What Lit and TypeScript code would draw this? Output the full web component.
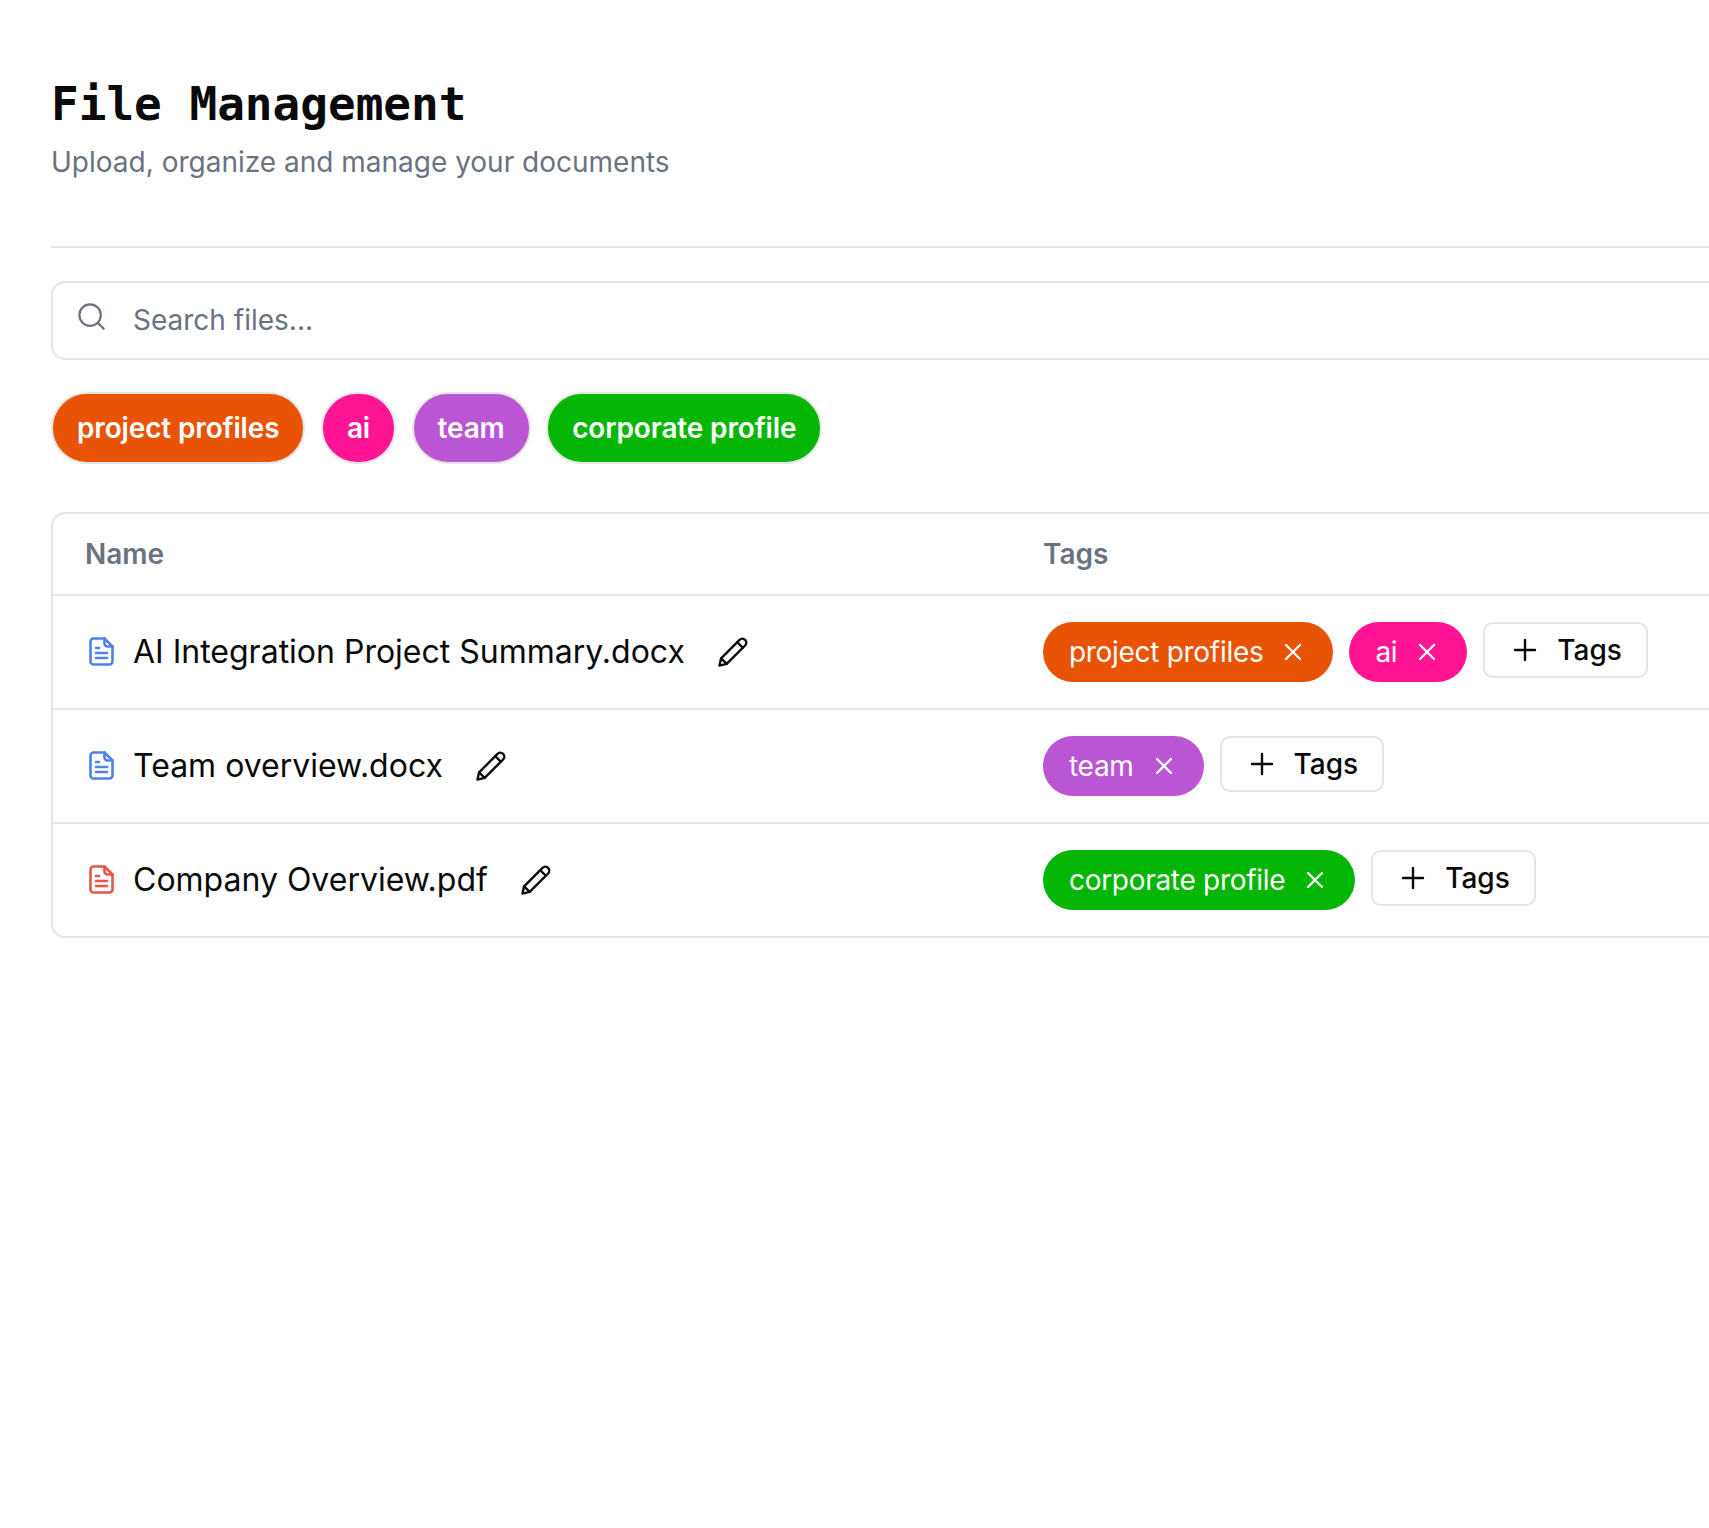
import { LitElement, html, css } from "lit";
import { customElement } from "lit/decorators.js";

const FILES = [
  { name: "AI Integration Project Summary.docx", color: "#4f83e3", tags: [["project profiles", "#e85305"], ["ai", "#ff1493"]] },
  { name: "Team overview.docx", color: "#4f83e3", tags: [["team", "#ba55d3"]] },
  { name: "Company Overview.pdf", color: "#e5574a", tags: [["corporate profile", "#05b605"]] },
];
const CHIPS = [["project profiles", "#e85305"], ["ai", "#ff1493"], ["team", "#ba55d3"], ["corporate profile", "#05b605"]];

const fileIcon = (c: string) => html`<svg class="file" style="color:${c}" viewBox="0 0 25 29" fill="none" stroke="currentColor" stroke-width="2.6" stroke-linecap="round" stroke-linejoin="round">
  <path d="M4.5 1.5H15.5L23.5 9.5V24.5a3 3 0 0 1-3 3H4.5a3 3 0 0 1-3-3V4.5a3 3 0 0 1 3-3Z"/>
  <path d="M15.5 1.5V6.5a3 3 0 0 0 3 3H23.5"/>
  <path d="M7 11H10M7 16H18M7 21H18"/></svg>`;
const pencil = html`<svg class="pencil" viewBox="0 0 29 29" fill="none" stroke="currentColor" stroke-width="2.3" stroke-linecap="round" stroke-linejoin="round">
  <path d="M1.4 27.6L3 20.6L20.8 2.8A3.5 3.5 0 0 1 26.2 8.2L8.4 26Z"/>
  <path d="M18.6 5L24 10.4"/><path d="M3 20.6L8.4 26"/></svg>`;
const xIcon = html`<svg class="x" viewBox="0 0 18 18" fill="none" stroke="currentColor" stroke-width="2.3" stroke-linecap="round"><path d="M2 2L16 16M16 2L2 16"/></svg>`;
const plus = html`<svg class="plus" viewBox="0 0 24 24" fill="none" stroke="currentColor" stroke-width="2.4" stroke-linecap="round"><path d="M12 2V22M2 12H22"/></svg>`;
const search = html`<svg class="search" viewBox="0 0 29 29" fill="none" stroke="currentColor" stroke-width="2.4" stroke-linecap="round"><circle cx="13" cy="13" r="11.5"/><path d="M21.5 21.5L27.5 27.5"/></svg>`;

@customElement("app-root")
export class AppRoot extends LitElement {
  static styles = css`
    :host { display: block; width: 100vw; height: 1528px; overflow: hidden; background: #fff; font-family: Inter, "Liberation Sans", sans-serif; }
    .page { width: 1900px; box-sizing: border-box; padding: 73px 0 0 51px; }
    h1 { margin: 0; font: 700 46px/62px "DejaVu Sans Mono", monospace; color: #0a0a0a; }
    .sub { margin: 7px 0 0; font-size: 28px; line-height: 40px; color: #6b7280; }
    .rule { height: 2px; background: #e5e5e5; margin-top: 64px; }
    .searchbox { margin-top: 33px; height: 79px; box-sizing: border-box; border: 2px solid #e5e5e5; border-radius: 14px; display: flex; align-items: center; padding: 0 0 2px 25px; gap: 28px; color: #6b7280; font-size: 28px; }
    .search { width: 27px; height: 27px; margin-top: -7px; }
    .chips { display: flex; gap: 15.5px; margin-top: 32px; }
    .chip { height: 72px; box-sizing: border-box; border: 2px solid #e5e5e5; border-radius: 36px; padding: 0 24px; display: flex; align-items: center; color: #fff; font-size: 28px; font-weight: 600; letter-spacing: -0.15px; }
    .table { margin-top: 48px; border: 2px solid #e5e5e5; border-radius: 14px; }
    .row { display: grid; grid-template-columns: 990px 1fr; height: 112px; border-top: 2px solid #e5e5e5; align-items: center; }
    .row.head { height: 80px; border-top: 0; color: #6b7280; font-size: 28px; font-weight: 600; }
    .row.head div:first-child { padding-left: 32px; }
    .name { display: flex; align-items: center; padding: 0 0 1px 36px; font-size: 32px; color: #0a0a0a; }
    .file { width: 25px; height: 29px; margin-right: 19px; }
    .pencil { width: 30px; height: 30px; margin-left: 33px; color: #0a0a0a; }
    .tags { display: flex; gap: 16px; align-items: center; }
    .tag { height: 60px; border-radius: 30px; padding: 0 31px 0 26px; display: flex; align-items: center; gap: 21px; color: #fff; font-size: 28px; letter-spacing: -0.3px; }
    .x { width: 18px; height: 18px; }
    .add { height: 56px; box-sizing: border-box; margin-top: -4px; border: 2px solid #e5e5e5; border-radius: 10px; padding: 0 24px 0 28px; display: flex; align-items: center; gap: 20px; color: #0a0a0a; font-size: 28px; font-weight: 500; }
    .plus { width: 24px; height: 24px; }
  `;
  render() {
    return html`<div class="page">
      <h1>File Management</h1>
      <p class="sub">Upload, organize and manage your documents</p>
      <div class="rule"></div>
      <div class="searchbox">${search}<span>Search files...</span></div>
      <div class="chips">${CHIPS.map(([t, c]) => html`<div class="chip" style="background:${c}">${t}</div>`)}</div>
      <div class="table">
        <div class="row head"><div>Name</div><div>Tags</div></div>
        ${FILES.map(f => html`<div class="row">
          <div class="name">${fileIcon(f.color)}<span>${f.name}</span>${pencil}</div>
          <div class="tags">
            ${f.tags.map(([t, c]) => html`<div class="tag" style="background:${c}">${t}${xIcon}</div>`)}
            <div class="add">${plus}<span>Tags</span></div>
          </div>
        </div>`)}
      </div>
    </div>`;
  }
}
